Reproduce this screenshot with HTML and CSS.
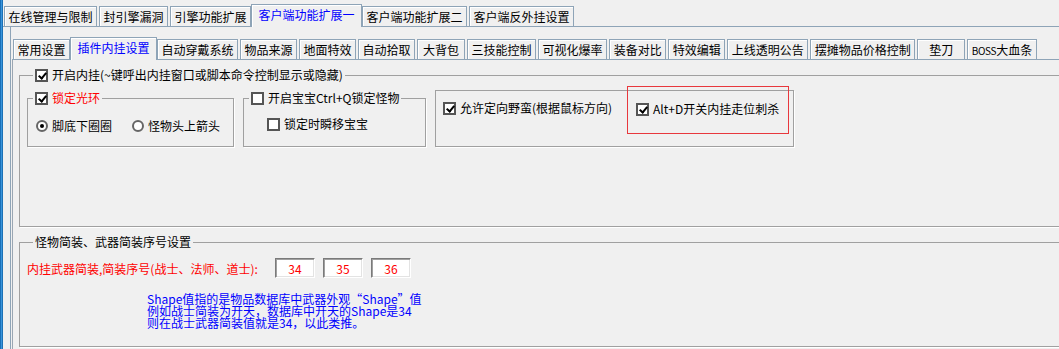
FILE: index.html
```html
<!DOCTYPE html>
<html lang="zh-CN">
<head>
  <meta charset="UTF-8" />
  <title>客户端功能扩展一</title>
  <link rel="stylesheet" href="styles.css">
</head>
<body>
  <div class="window">
    <div class="edge"></div>
    <div class="client">
      <div class="tabs tabs-main">
        <div class="tab">在线管理与限制</div>
        <div class="tab">封引擎漏洞</div>
        <div class="tab">引擎功能扩展</div>
        <div class="tab active">客户端功能扩展一</div>
        <div class="tab">客户端功能扩展二</div>
        <div class="tab">客户端反外挂设置</div>
      </div>

      <div class="page page-outer">
        <div class="tabs tabs-sub">
          <div class="tab">常用设置</div>
          <div class="tab active">插件内挂设置</div>
          <div class="tab">自动穿戴系统</div>
          <div class="tab">物品来源</div>
          <div class="tab">地面特效</div>
          <div class="tab">自动拾取</div>
          <div class="tab">大背包</div>
          <div class="tab">三技能控制</div>
          <div class="tab">可视化爆率</div>
          <div class="tab">装备对比</div>
          <div class="tab">特效编辑</div>
          <div class="tab">上线透明公告</div>
          <div class="tab">摆摊物品价格控制</div>
          <div class="tab">垫刀</div>
          <div class="tab"><span class="small">BOSS</span>大血条</div>
        </div>

        <div class="page page-inner">
          <fieldset class="group group-main">
            <legend><span class="lg"><span class="cb on"></span>开启内挂(~键呼出内挂窗口或脚本命令控制显示或隐藏)</span></legend>
            <div class="sub-row">
              <fieldset class="group sub sub-ring">
                <legend><span class="lg red"><span class="cb on"></span>锁定光环</span></legend>
                <div class="sub-body">
                  <div class="opt"><span class="rb on"></span>脚底下圈圈</div>
                  <div class="opt"><span class="rb"></span>怪物头上箭头</div>
                </div>
              </fieldset>

              <fieldset class="group sub sub-pet">
                <legend><span class="lg"><span class="cb"></span>开启宝宝Ctrl+Q锁定怪物</span></legend>
                <div class="sub-body">
                  <div class="opt"><span class="cb"></span>锁定时瞬移宝宝</div>
                </div>
              </fieldset>

              <fieldset class="group sub sub-kill">
                <div class="sub-body">
                  <div class="opt"><span class="cb on"></span>允许定向野蛮(根据鼠标方向)</div>
                  <div class="mark">
                    <div class="opt"><span class="cb on"></span>Alt+D开关内挂走位刺杀</div>
                  </div>
                </div>
              </fieldset>
            </div>
          </fieldset>

          <fieldset class="group group-armor">
            <legend><span class="lg">怪物简装、武器简装序号设置</span></legend>
            <div class="armor-row">
              <div class="armor-label red">内挂武器简装,简装序号(战士、法师、道士):</div>
              <input type="text" value="34" />
              <input type="text" value="35" />
              <input type="text" value="36" />
            </div>
            <div class="note">
              Shape值指的是物品数据库中武器外观“Shape”值<br>
              例如战士简装为开天，数据库中开天的Shape是34<br>
              则在战士武器简装值就是34，以此类推。
            </div>
          </fieldset>
        </div>
      </div>
    </div>
  </div>
</body>
</html>
```

FILE: styles.css
```css
html, body {
  height: 100%;
  overflow: hidden;
}
body {
  margin: 0;
  background: #f0f0f0;
  color: #000;
  font-family: "Noto Sans CJK SC", sans-serif;
  font-size: 12px;
}

.window {
  display: flex;
  height: 100vh;
}
.edge {
  width: 3px;
  flex: none;
  background: linear-gradient(to right, #0b5ea6, #3a95dc, #0d5fa3);
}
.client {
  flex: 1;
  min-width: 0;
  display: flex;
  flex-direction: column;
}

/* tab strips */
.tabs {
  display: flex;
  align-items: flex-end;
  gap: 2px;
  height: 22px;
  border-bottom: 1px solid #8ea4b7;
}
.tabs-main {
  margin-top: 4px;
  padding-left: 1px;
}
.tabs-sub {
  margin: 10px 0 0 1px;
  padding-left: 1px;
}
.tab {
  height: 20px;
  min-width: 48px;
  box-sizing: border-box;
  padding: 0 3.5px;
  border: 1px solid #8ea4b7;
  border-bottom: none;
  box-shadow: inset 1px 1px 0 #fff;
  line-height: 19px;
  text-align: center;
  white-space: nowrap;
}
.tab.active {
  position: relative;
  height: 23px;
  margin: 0 -2px -1px;
  padding: 0 6.5px;
  background: #f0f0f0;
  color: #0000ff;
  line-height: 20px;
}
.small {
  font-size: 10px;
  letter-spacing: -0.3px;
}

.page {
  flex: 1;
  display: flex;
  flex-direction: column;
}
.page-outer {
  margin-left: 7px;
  border-left: 1px solid #8ea4b7;
}
.page-inner {
  margin-left: 1px;
  border-left: 1px solid #9aa6b2;
}

/* group boxes */
.group {
  margin: 0;
  padding: 0;
  min-width: 0;
  box-sizing: border-box;
  border: 1px solid #a0a0a0;
  box-shadow: 1px 1px 0 #fff;
}
.group > legend {
  margin-left: 6px;
  padding: 0 2px;
}
.sub > legend {
  margin-left: 5px;
}
.lg {
  display: flex;
  align-items: center;
  gap: 4px;
  height: 16px;
  line-height: 16px;
  white-space: nowrap;
}
.group-main {
  margin: 7px -20px 0 6px;
  padding: 7px 0 79px 7px;
}
.group-armor {
  margin: 7px -20px 0 6px;
  padding: 0 0 17px 7px;
}

.sub-row {
  display: flex;
  gap: 9px;
}
.sub-ring { width: 207px; }
.sub-pet { width: 183px; }
.sub-kill { width: 359px; }

.sub-body {
  height: 40px;
  box-sizing: border-box;
  display: flex;
  align-items: center;
}
.sub-ring .sub-body {
  gap: 20px;
  padding-left: 8px;
}
.sub-pet .sub-body {
  align-items: flex-start;
  padding: 11px 0 0 23px;
}
.sub-kill .sub-body {
  justify-content: space-between;
  padding: 0 4px 6px 7px;
}
.mark {
  align-self: flex-start;
  width: 162px;
  height: 48px;
  margin-top: -5px;
  box-sizing: border-box;
  padding: 0 0 2px 8px;
  border: 1px solid #e8383d;
  display: flex;
  align-items: center;
}

.opt {
  display: flex;
  align-items: center;
  gap: 4px;
  line-height: 14px;
  white-space: nowrap;
}

/* check boxes and radios */
.cb {
  flex: none;
  width: 13px;
  height: 13px;
  box-sizing: border-box;
  border: 2px solid #555;
  background: #fff;
}
.cb.on::after {
  content: "";
  display: block;
  width: 3px;
  height: 6px;
  margin: 0 0 0 2.5px;
  border: solid #000;
  border-width: 0 2px 2px 0;
  transform: rotate(40deg);
}
.rb {
  flex: none;
  width: 12px;
  height: 12px;
  box-sizing: border-box;
  border: 2px solid #666;
  border-radius: 50%;
  background: #fff;
  display: grid;
  place-items: center;
}
.rb.on::after {
  content: "";
  width: 4px;
  height: 4px;
  border-radius: 50%;
  background: #000;
}

.red { color: #ff0000; }

.armor-row {
  display: flex;
  align-items: center;
  gap: 8px;
  margin-top: 8px;
}
.armor-label {
  width: 240px;
  white-space: nowrap;
}
.armor-row input {
  width: 40px;
  height: 20px;
  box-sizing: border-box;
  padding: 0;
  border: 1px solid;
  border-color: #7a7a7a #fff #fff #7a7a7a;
  box-shadow: inset 1px 1px 0 #a0a0a0, inset -1px -1px 0 #e3e3e3;
  background: #fff;
  color: #ff0000;
  font-family: "Noto Sans CJK SC", sans-serif;
  font-size: 12px;
  text-align: center;
  outline: none;
}
.note {
  margin: 15px 0 0 120px;
  color: #0000ff;
  line-height: 12px;
  white-space: nowrap;
}
```
